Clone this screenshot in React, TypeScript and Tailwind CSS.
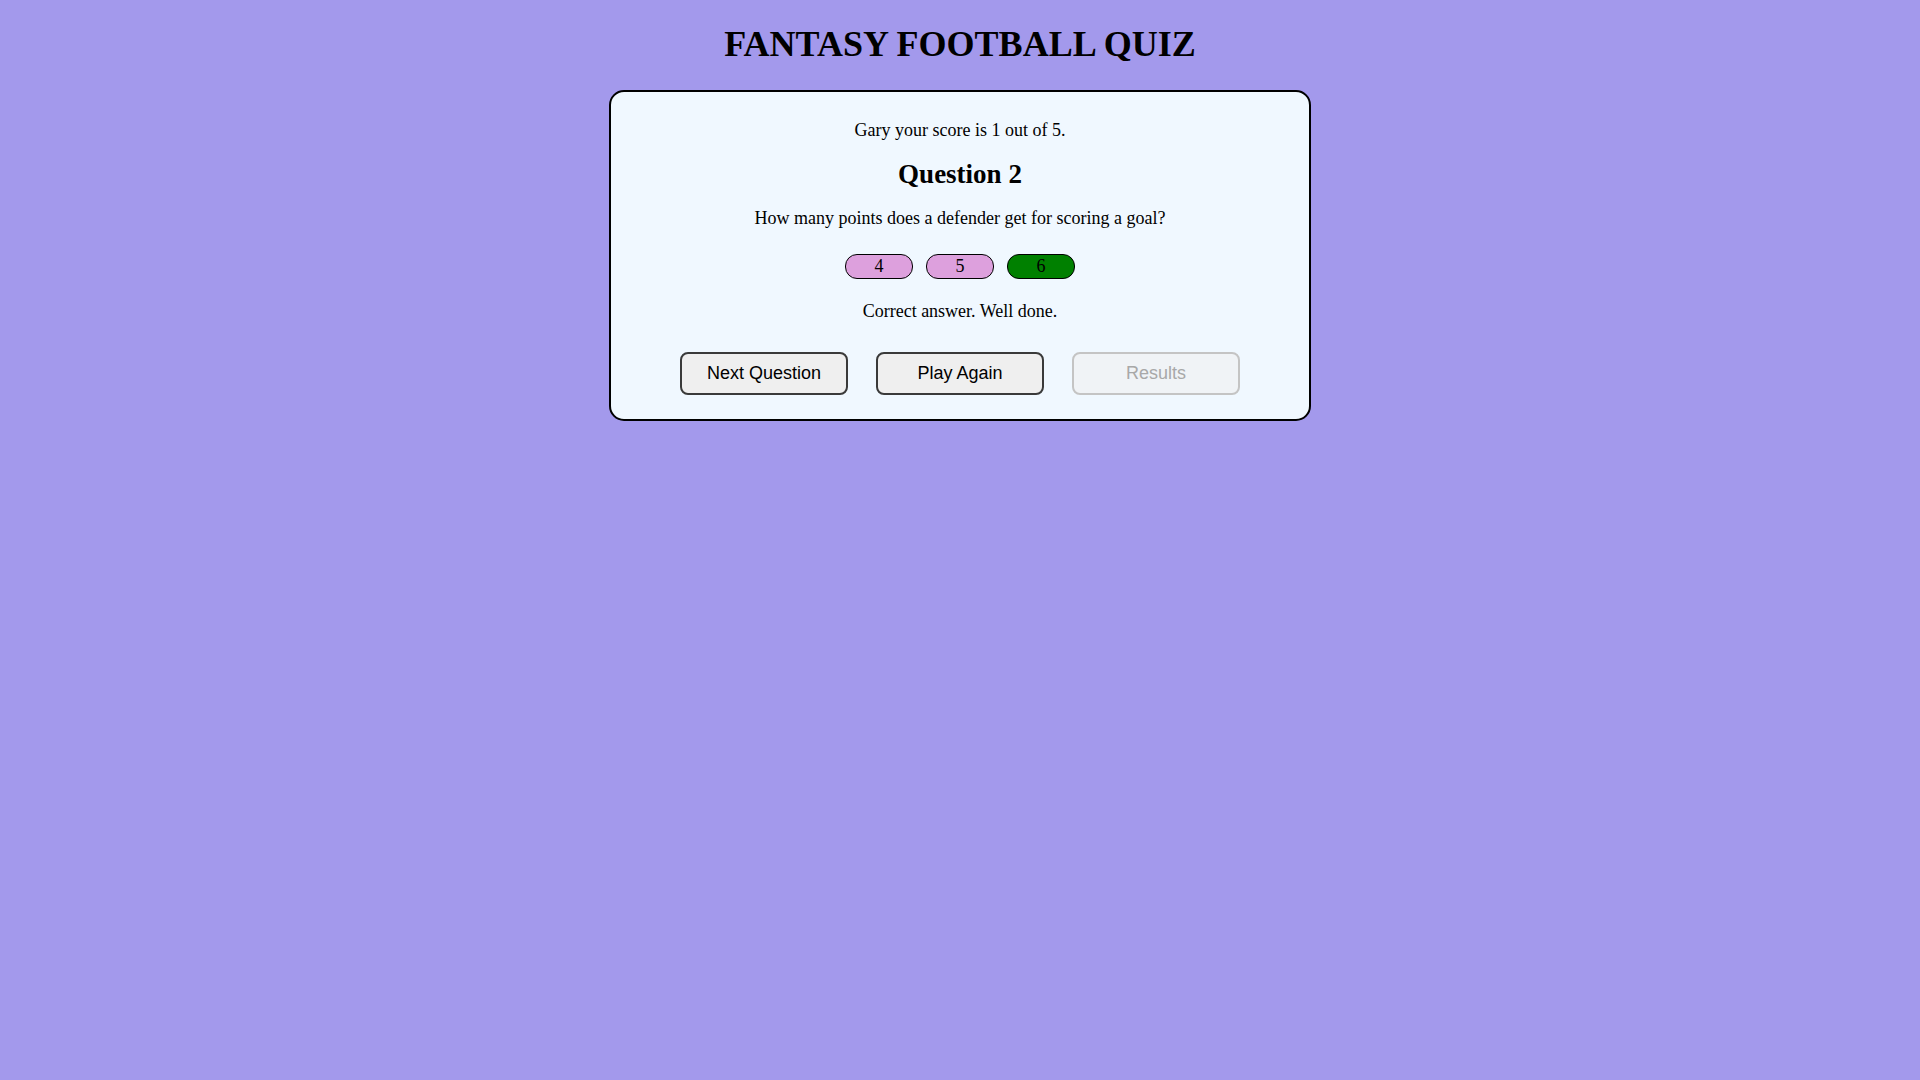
export default function App() {
  const answers = [
    { label: "4", correct: false },
    { label: "5", correct: false },
    { label: "6", correct: true },
  ]

  return (
    <div className="min-h-screen bg-[#a399ec] pt-[24px] font-['Liberation_Serif',serif] text-black">
      <h1 className="text-center text-[36px] font-bold leading-[41px]">FANTASY FOOTBALL QUIZ</h1>

      <div className="mx-auto mt-[25px] flex w-[702px] flex-col items-center rounded-[15px] border-2 border-black bg-[#f0f8ff] pt-[28px] pb-[24px]">
        <p className="text-[18px] leading-[21px]">Gary your score is 1 out of 5.</p>
        <h2 className="mt-[18px] text-[27px] font-bold leading-[31px]">Question 2</h2>
        <p className="mt-[18px] text-[18px] leading-[21px]">How many points does a defender get for scoring a goal?</p>

        <div className="mt-[25px] flex gap-[13px]">
          {answers.map((a) => (
            <button
              key={a.label}
              className={
                a.correct
                  ? "h-[25px] w-[68px] rounded-[12px] border border-black bg-[#008000] pb-[2px] text-[18px] leading-none"
                  : "h-[25px] w-[68px] rounded-[12px] border border-black bg-[#dda0dd] pb-[2px] text-[18px] leading-none"
              }
            >
              {a.label}
            </button>
          ))}
        </div>

        <p className="mt-[22px] text-[18px] leading-[21px]">Correct answer. Well done.</p>

        <div className="mt-[30px] flex gap-[28px] font-['Liberation_Sans',Arial,sans-serif]">
          <button className="h-[43px] w-[168px] rounded-[8px] border-2 border-[#3a3a3a] bg-[#efefef] text-[18px] text-black">
            Next Question
          </button>
          <button className="h-[43px] w-[168px] rounded-[8px] border-2 border-[#3a3a3a] bg-[#efefef] text-[18px] text-black">
            Play Again
          </button>
          <button
            disabled
            className="h-[43px] w-[168px] rounded-[8px] border-2 border-[#c4c4c4] bg-[#f0f3f6] text-[18px] text-[#a8a8a8]"
          >
            Results
          </button>
        </div>
      </div>
    </div>
  )
}
